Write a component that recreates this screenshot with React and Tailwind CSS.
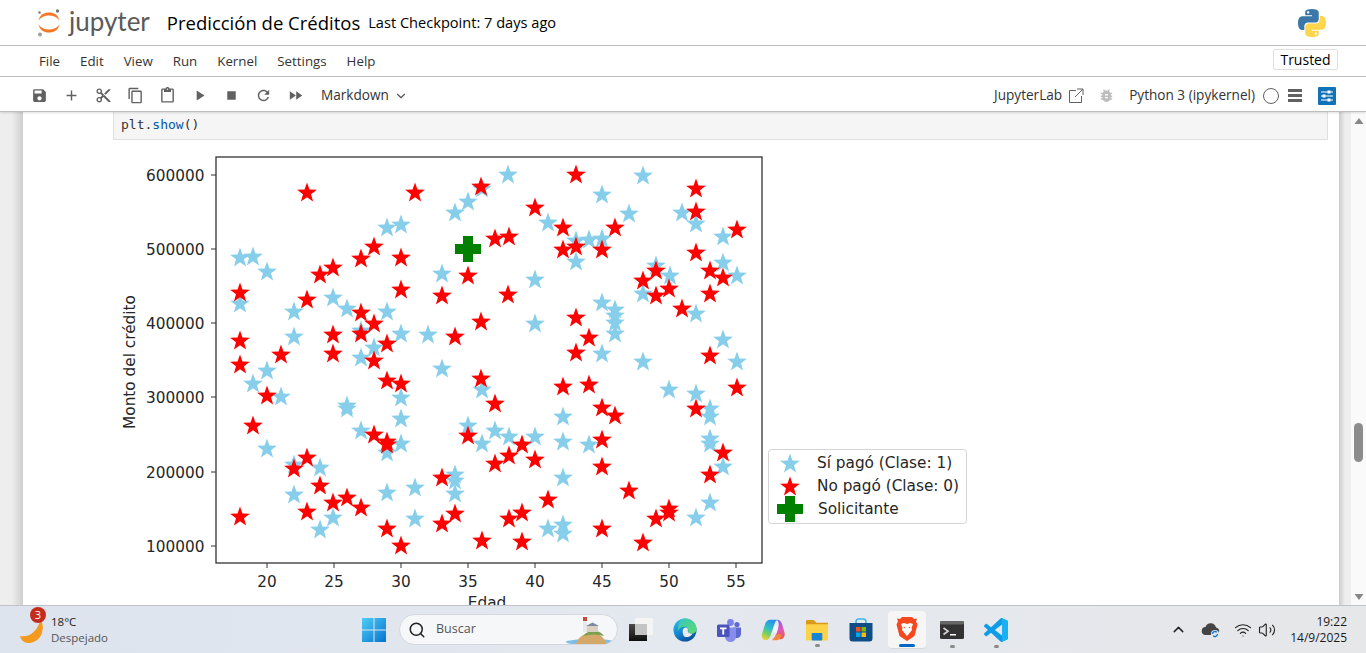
import { ChevronDown, ChevronUp, Wifi, Volume2, Search } from 'lucide-react';

const blue = [
  [240,257],[253,256],[267,271],[333,297],[347,308],[294,311],[387,311],[240,303],[294,336],[361,330],[401,333],[428,334],[361,357],[374,347],[267,370],[442,368],[387,227],[401,224],[442,273],[455,212],
  [508,174],[482,188],[468,201],[643,175],[602,194],[629,213],[682,212],[696,223],[548,222],[723,236],[576,240],[589,239],[602,238],[576,261],[535,279],[656,265],[670,275],[643,293],[723,262],[737,275],[696,313],[602,302],[615,309],[615,315],[615,322],[615,333],[535,323],[723,339],[602,353],[643,361],[737,361],
  [253,383],[281,396],[347,405],[347,408],[401,397],[401,418],[361,430],[401,443],[387,452],[267,448],[294,464],[320,467],[294,494],[387,492],[415,487],[333,517],[415,518],[320,529],
  [482,389],[669,389],[696,393],[710,408],[710,416],[563,416],[468,425],[495,430],[509,436],[482,443],[535,436],[563,441],[589,444],[710,438],[710,443],[723,466],[455,474],[455,480],[455,493],[563,477],[710,502],[696,517],[548,528],[563,524],[563,533],
];

const red = [
  [307,192],[415,192],[374,246],[401,257],[361,258],[333,267],[320,274],[401,289],[442,295],[307,299],[240,292],[361,312],[374,323],[361,333],[333,334],[240,340],[387,343],[281,354],[333,353],[374,360],[240,364],[387,380],[401,383],
  [481,186],[576,174],[696,188],[696,211],[535,207],[563,227],[615,227],[737,229],[495,238],[509,236],[563,249],[576,246],[602,249],[696,252],[468,275],[710,270],[723,277],[656,270],[643,280],[669,288],[656,295],[710,293],[508,294],[682,308],[576,317],[481,321],[455,336],[589,337],[576,352],[710,355],[481,378],
  [267,395],[253,425],[374,434],[387,441],[387,444],[307,457],[294,468],[320,485],[347,497],[333,502],[361,507],[307,511],[240,516],[387,528],[401,545],[442,477],[442,523],
  [563,386],[589,384],[737,387],[495,403],[602,407],[696,408],[615,415],[468,435],[602,439],[723,452],[522,444],[509,455],[495,463],[535,459],[602,466],[710,474],[629,490],[548,499],[669,508],[669,512],[656,518],[522,512],[509,518],[455,513],[602,528],[482,540],[522,541],[643,542],
];

const starPoints = Array.from({ length: 10 }, (_, i) => {
  const r = i % 2 === 0 ? 10.4 : 4.2;
  const a = (i * Math.PI) / 5;
  return `${(r * Math.sin(a)).toFixed(2)},${(1 - r * Math.cos(a)).toFixed(2)}`;
}).join(' ');

const xTicks = [[267,'20'],[334,'25'],[401,'30'],[468,'35'],[535,'40'],[602,'45'],[669,'50'],[736,'55']];
const yTicks = [[175,'600000'],[249,'500000'],[323,'400000'],[397,'300000'],[472,'200000'],[546,'100000']];

const chartFont = { fontFamily: '"DejaVu Sans", sans-serif' };

function Star({ x, y, fill }) {
  return <polygon points={starPoints} transform={`translate(${x} ${y})`} fill={fill} />;
}

function Plus({ x, y }) {
  return <path transform={`translate(${x} ${y})`} d="M-5 -13H5V-5H13V5H5V13H-5V5H-13V-5H-5Z" fill="#008000" />;
}

function Chart() {
  return (
    <svg width="870" height="470" viewBox="113 140 870 470" className="block shrink-0" style={chartFont}>
      {blue.map(([x, y], i) => <Star key={i} x={x} y={y} fill="#87ceeb" />)}
      {red.map(([x, y], i) => <Star key={i} x={x} y={y} fill="#ff0000" />)}
      <Plus x={468} y={249} />
      <rect x="216" y="157" width="546" height="406" fill="none" stroke="#333" strokeWidth="1.3" />
      {xTicks.map(([x, t]) => (
        <g key={t}>
          <line x1={x} x2={x} y1="563" y2="568" stroke="#333" />
          <text x={x} y="587" fontSize="15.3" textAnchor="middle" fill="#262626">{t}</text>
        </g>
      ))}
      {yTicks.map(([y, t]) => (
        <g key={t}>
          <line x1="211" x2="216" y1={y} y2={y} stroke="#333" />
          <text x="204.5" y={y + 5.5} fontSize="15.3" textAnchor="end" fill="#262626">{t}</text>
        </g>
      ))}
      <text x="487" y="608" fontSize="15.3" textAnchor="middle" fill="#262626">Edad</text>
      <text transform="translate(135 362) rotate(-90)" fontSize="15.3" textAnchor="middle" fill="#262626">Monto del crédito</text>
      <rect x="768.5" y="449.5" width="198" height="74" rx="3" fill="#fff" stroke="#d4d4d4" />
      <Star x={790} y={463} fill="#87ceeb" />
      <Star x={790} y={486} fill="#ff0000" />
      <Plus x={790} y={509} />
      <text x="817" y="468" fontSize="15.3" fill="#262626">Sí pagó (Clase: 1)</text>
      <text x="817" y="491" fontSize="15.3" fill="#262626">No pagó (Clase: 0)</text>
      <text x="818" y="514" fontSize="15.3" fill="#262626">Solicitante</text>
    </svg>
  );
}

function Md({ d, size = 17, fill = '#616161' }) {
  return (
    <svg width={size} height={size} viewBox="0 0 24 24" fill={fill}><path d={d} /></svg>
  );
}

const toolIcons = [
  'M17 3H5c-1.11 0-2 .9-2 2v14c0 1.1.89 2 2 2h14c1.1 0 2-.9 2-2V7l-4-4zm-5 16c-1.66 0-3-1.34-3-3s1.34-3 3-3 3 1.34 3 3-1.34 3-3 3zm3-10H5V5h10v4z',
  'M19 13h-6v6h-2v-6H5v-2h6V5h2v6h6v2z',
  'M9.64 7.64c.23-.5.36-1.05.36-1.64 0-2.21-1.79-4-4-4S2 3.79 2 6s1.79 4 4 4c.59 0 1.14-.13 1.64-.36L10 12l-2.36 2.36C7.14 14.13 6.59 14 6 14c-2.21 0-4 1.79-4 4s1.79 4 4 4 4-1.79 4-4c0-.59-.13-1.14-.36-1.64L12 14l7 7h3v-1L9.64 7.64zM6 8c-1.1 0-2-.89-2-2s.9-2 2-2 2 .89 2 2-.9 2-2 2zm0 12c-1.1 0-2-.89-2-2s.9-2 2-2 2 .89 2 2-.9 2-2 2zm6-7.5c-.28 0-.5-.22-.5-.5s.22-.5.5-.5.5.22.5.5-.22.5-.5.5zM19 3l-6 6 2 2 7-7V3z',
  'M16 1H4c-1.1 0-2 .9-2 2v14h2V3h12V1zm3 4H8c-1.1 0-2 .9-2 2v14c0 1.1.9 2 2 2h11c1.1 0 2-.9 2-2V7c0-1.1-.9-2-2-2zm0 16H8V7h11v14z',
  'M19 2h-4.18C14.4.84 13.3 0 12 0c-1.3 0-2.4.84-2.82 2H5c-1.1 0-2 .9-2 2v16c0 1.1.9 2 2 2h14c1.1 0 2-.9 2-2V4c0-1.1-.9-2-2-2zm-7 0c.55 0 1 .45 1 1s-.45 1-1 1-1-.45-1-1 .45-1 1-1zm7 18H5V4h2v3h10V4h2v16z',
  'M8 5v14l11-7z',
  'M6 6h12v12H6z',
  'M17.65 6.35C16.2 4.9 14.21 4 12 4c-4.42 0-7.99 3.58-7.99 8s3.57 8 7.99 8c3.73 0 6.84-2.55 7.73-6h-2.08c-.82 2.33-3.04 4-5.65 4-3.31 0-6-2.69-6-6s2.69-6 6-6c1.66 0 3.14.69 4.22 1.78L13 11h7V4l-2.35 2.35z',
  'M4 18l8.5-6L4 6v12zm9-12v12l8.5-6L13 6z',
];

function JupyterMark() {
  return (
    <svg width="24" height="29" viewBox="0 0 24 29">
      <path d="M1.5 12.5C3 6.5 7 4.5 12 4.5s9 2 10.500 8C20 9 16.500 7.500 12 7.500S4 9 1.500 12.500Z" fill="#f37726" />
      <path d="M1.500 16.500C3 22.500 7 24.500 12 24.500s9-2 10.500-8C20 20 16.500 21.500 12 21.500S4 20 1.500 16.500Z" fill="#f37726" />
      <circle cx="20.500" cy="3" r="1.700" fill="#767677" />
      <circle cx="2.500" cy="4.500" r="1.200" fill="#767677" />
      <circle cx="3" cy="26.500" r="2" fill="#9e9e9e" />
    </svg>
  );
}

function PythonLogo() {
  return (
    <svg width="28" height="28" viewBox="0 0 24 24">
      <path fill="#3b77a8" d="M11.914 0C5.82 0 6.2 2.656 6.2 2.656l.007 2.752h5.814v.826H3.9S0 5.789 0 11.969c0 6.18 3.403 5.96 3.403 5.96h2.03v-2.867s-.109-3.42 3.35-3.42h5.766s3.24.052 3.24-3.148V3.202S18.28 0 11.913 0zM8.708 1.85c.578 0 1.046.47 1.046 1.052 0 .581-.468 1.051-1.046 1.051-.579 0-1.046-.47-1.046-1.051 0-.582.467-1.052 1.046-1.052z" />
      <path fill="#fdd64b" d="M12.087 24c6.092 0 5.712-2.656 5.712-2.656l-.007-2.752h-5.814v-.826h8.123s3.9.445 3.9-5.735c0-6.18-3.404-5.96-3.404-5.96h-2.03v2.867s.109 3.42-3.35 3.42H9.45s-3.24-.052-3.24 3.148v5.292S5.72 24 12.087 24zm3.206-1.85c-.578 0-1.046-.47-1.046-1.052 0-.581.468-1.051 1.046-1.051.579 0 1.046.47 1.046 1.051 0 .582-.467 1.052-1.046 1.052z" />
    </svg>
  );
}

function WindowsLogo() {
  return (
    <svg width="24" height="24" viewBox="0 0 24 24">
      <defs>
        <linearGradient id="win" x1="0" y1="0" x2="1" y2="1">
          <stop offset="0" stopColor="#4fcdf5" />
          <stop offset="1" stopColor="#0673d0" />
        </linearGradient>
      </defs>
      <path fill="url(#win)" d="M0 0h11.500v11.500H0zM12.500 0H24v11.500H12.500zM0 12.500h11.500V24H0zM12.500 12.500H24V24H12.500z" />
    </svg>
  );
}

function TaskView() {
  return (
    <svg width="24" height="24" viewBox="0 0 24 24">
      <defs>
        <linearGradient id="tv" x1="0" y1="0" x2="0" y2="1">
          <stop offset="0" stopColor="#4a4a4a" />
          <stop offset="1" stopColor="#0e0e0e" />
        </linearGradient>
      </defs>
      <rect x="0" y="6" width="18" height="17" fill="url(#tv)" />
      <rect x="6" y="0" width="18" height="17" fill="#f4f4f4" />
      <rect x="6" y="6" width="12" height="11" fill="#c4c4c4" />
    </svg>
  );
}

function EdgeIcon() {
  return (
    <svg width="26" height="26" viewBox="0 0 26 26">
      <defs>
        <linearGradient id="edge" x1="0.1" y1="0" x2="0.6" y2="1">
          <stop offset="0" stopColor="#2fc0e6" />
          <stop offset="0.55" stopColor="#1688d4" />
          <stop offset="1" stopColor="#0b4f9c" />
        </linearGradient>
        <linearGradient id="edgeg" x1="0" y1="0" x2="1" y2="1">
          <stop offset="0" stopColor="#34c6c0" />
          <stop offset="1" stopColor="#62dc6a" />
        </linearGradient>
      </defs>
      <circle cx="13" cy="13" r="12.500" fill="url(#edge)" />
      <path d="M13 .5c7 0 12.500 5 12.500 11.500 0 3-2 5-5 5-2.500 0-4.500-1-4-3 .5-3-2-5-5-4.500C8 10 6 12 5.500 14 5 6 8 .5 13 .5Z" fill="url(#edgeg)" />
      <path d="M10.500 14c0-2.500 2-4 4-3.500 1.500.4 2 1.500 1.500 3-.4 1.500 1.500 3.500 5 3.500-1.500 3-5 4-7.500 3.500-2.500-.6-3-4-3-6.500Z" fill="#e8eaee" />
    </svg>
  );
}

function TeamsIcon() {
  return (
    <svg width="24" height="24" viewBox="0 0 24 24">
      <circle cx="20" cy="6.500" r="2.600" fill="#5f68d0" />
      <circle cx="13.500" cy="4.500" r="3.400" fill="#7b83eb" />
      <path d="M16 9.500h8v6.500a4 4 0 0 1-6 3.500" fill="#5f68d0" />
      <path d="M8 9.500h11v9a5.500 5.500 0 0 1-11 0Z" fill="#868ded" />
      <rect x="0" y="6.500" width="12.500" height="12.500" rx="1.500" fill="#4b53bc" />
      <path d="M3 9.500h6.500v1.700H7.200v5.300H5.300v-5.300H3Z" fill="#fff" />
    </svg>
  );
}

function CopilotIcon() {
  return (
    <svg width="26" height="26" viewBox="0 0 26 26">
      <defs>
        <linearGradient id="cop1" x1="0.6" y1="0" x2="0.2" y2="1">
          <stop offset="0" stopColor="#2a8fe8" />
          <stop offset="0.4" stopColor="#2bc0c8" />
          <stop offset="0.7" stopColor="#7fd05a" />
          <stop offset="1" stopColor="#f5cf3a" />
        </linearGradient>
        <linearGradient id="cop2" x1="0.4" y1="0" x2="0.7" y2="1">
          <stop offset="0" stopColor="#7a5be8" />
          <stop offset="0.5" stopColor="#d85cc0" />
          <stop offset="1" stopColor="#f0584a" />
        </linearGradient>
      </defs>
      <path d="M10 2h8c-2 1-3 3-4 6l-3 9c-1 4-3 7-6 7-3 0-5-3-4-7l3-9C5 4 7 2 10 2Z" fill="url(#cop1)" />
      <path d="M16 2h1c3 0 5 2 6 5l2.500 9c.8 4-1.500 7-4.500 7h-9c3-1 4-4 5-7l2-7c.5-2 .5-5-2-7Z" fill="url(#cop2)" />
      <path d="M11 24c3 0 4-3 5-6h6c0 3-2 6-5 6Z" fill="#f08a3a" />
      <path d="M14 10c.5-1 1.500-2 3-2 1 0 1.500 1 1.500 2l-1.500 6h-4Z" fill="#f4f4fa" />
    </svg>
  );
}

function ExplorerIcon() {
  return (
    <svg width="25" height="22" viewBox="0 0 25 22">
      <path d="M1 2A1.500 1.500 0 0 1 2.500 .5H9l3 3h12v3H1Z" fill="#d99a1c" />
      <path d="M1 5h23v16a1 1 0 0 1-1 1H2a1 1 0 0 1-1-1Z" fill="#fcd347" />
      <rect x="7" y="14" width="11" height="8" rx="1" fill="#1583d6" />
    </svg>
  );
}

function StoreIcon() {
  return (
    <svg width="24" height="24" viewBox="0 0 24 24">
      <path d="M7 6V3.500A2.500 2.500 0 0 1 9.500 1h5A2.500 2.500 0 0 1 17 3.500V6" fill="none" stroke="#38b6e8" strokeWidth="1.600" />
      <path d="M0.500 5h23v15.500a3 3 0 0 1-3 3h-17a3 3 0 0 1-3-3Z" fill="#0f4d87" />
      <rect x="7" y="9" width="4.500" height="4.500" fill="#f25022" />
      <rect x="12.500" y="9" width="4.500" height="4.500" fill="#7fba00" />
      <rect x="7" y="14.500" width="4.500" height="4.500" fill="#00a4ef" />
      <rect x="12.500" y="14.500" width="4.500" height="4.500" fill="#ffb900" />
    </svg>
  );
}

function BraveIcon() {
  return (
    <svg width="22" height="26" viewBox="0 0 22 26">
      <path d="M6 1h10l2 2 3-.5-1 3 1.500 3-3 11.500L11 25 3.500 20 .5 8.500 2 5.500 1 2.500l3 .5Z" fill="#f4491f" />
      <path d="M5 8l3-1 3 1 3-1 3 1-1.500 4 .5 2-2.500 3-2.500 3-2.500-3L6 14l.5-2Z" fill="#fff" />
      <path d="M7.500 10.500l2 1-1.500.8ZM14.500 10.500l-2 1 1.500.8Z" fill="#f4491f" />
    </svg>
  );
}

function TerminalIcon() {
  return (
    <svg width="24" height="18" viewBox="0 0 24 18">
      <rect width="24" height="18" rx="1.500" fill="#333" />
      <rect width="24" height="3.500" rx="1.500" fill="#666" />
      <path d="M3.500 7l4.500 3.200L3.500 13.500" fill="none" stroke="#d8d8d8" strokeWidth="1.600" />
      <rect x="10" y="13" width="6" height="1.500" fill="#fff" />
    </svg>
  );
}

function VsCodeIcon() {
  return (
    <svg width="24" height="24" viewBox="0 0 24 24">
      <path fill="#0d9de6" d="M23.15 2.587L18.21.21a1.494 1.494 0 0 0-1.705.29l-9.46 8.63-4.12-3.128a.999.999 0 0 0-1.276.057L.327 7.261A1 1 0 0 0 .326 8.74L3.899 12 .326 15.26a1 1 0 0 0 .001 1.479L1.65 17.94a.999.999 0 0 0 1.276.057l4.12-3.128 9.46 8.63a1.492 1.492 0 0 0 1.704.29l4.942-2.377A1.5 1.5 0 0 0 24 20.06V3.939a1.5 1.5 0 0 0-.85-1.352zm-5.146 14.861L10.826 12l7.178-5.448v10.896z" />
      <path fill="#1bb0f2" d="M18.004 23.79a1.5 1.5 0 0 0 .25-.022l4.896-2.355A1.5 1.5 0 0 0 24 20.06V3.939a1.5 1.5 0 0 0-.85-1.352L18.21.21c-.07-.034 0 0-.206-.08v6.422v10.896Z" />
    </svg>
  );
}

function Lighthouse() {
  return (
    <svg width="50" height="32" viewBox="0 0 50 32">
      <ellipse cx="25" cy="28" rx="25" ry="3" fill="#7fbde6" />
      <path d="M10 30c2-7 8-11 16-11s12 5 15 11Z" fill="#d4a868" />
      <path d="M17 22c3-4 7-5 12-5 4 0 7 2 9 5-7-2-14-2-21 0Z" fill="#7da050" />
      <rect x="17" y="7" width="4" height="11" fill="#e8e8e8" />
      <rect x="17" y="3" width="4" height="4" fill="#c9483a" />
      <rect x="21" y="12" width="11" height="6" fill="#d8cfc0" />
      <path d="M20 12l6.500-3.500L33 12Z" fill="#7a8aa0" />
    </svg>
  );
}

function Taskbar() {
  return (
    <div className="h-[48px] shrink-0 border-t border-[#bfc3c9] bg-gradient-to-r from-[#dde4ee] via-[#e4e8ef] to-[#e6e7e9] flex items-center relative">
      <div className="w-[362px] shrink-0 flex items-center pl-[20px] relative">
        <svg width="24" height="30" viewBox="0 0 24 30" className="mt-[2px]">
          <path d="M20 4c4 3 3.500 12 0 17-3 4-8 6-12 6-4 0-7-3-8-7 9 2 18-5 20-16Z" fill="#f39a1f" />
        </svg>
        <span className="absolute left-[30px] top-[-7px] w-[16px] h-[16px] rounded-full bg-[#c42b1c] text-white text-[11px] leading-[16px] text-center">3</span>
        <div className="ml-[7px] text-[11.5px] leading-[16px]">
          <div className="text-[#1a1a1a]">18°C</div>
          <div className="text-[#555]">Despejado</div>
        </div>
      </div>
      <WindowsLogo />
      <div className="ml-[13px] w-[219px] h-[31px] rounded-full bg-[#f5f7f9] border border-[#d4d8de] flex items-center pl-[8px] overflow-hidden">
        <Search size={18} color="#222" strokeWidth={2} />
        <span className="ml-[10px] text-[12.5px] text-[#555]">Buscar</span>
        <span className="ml-auto mr-[1px]"><Lighthouse /></span>
      </div>
      <div className="w-[380px] ml-[11px] flex items-center relative">
        <span className="w-[24px] flex justify-center"><TaskView /></span>
        <span className="w-[24px] ml-[20px] flex justify-center"><EdgeIcon /></span>
        <span className="w-[24px] ml-[20px] flex justify-center"><TeamsIcon /></span>
        <span className="w-[24px] ml-[20px] flex justify-center"><CopilotIcon /></span>
        <span className="w-[24px] ml-[20px] flex justify-center relative">
          <ExplorerIcon />
          <span className="absolute left-[10px] top-[25px] w-[5px] h-[3px] rounded-full bg-[#8a8a8a]" />
        </span>
        <span className="w-[24px] ml-[20px] flex justify-center"><StoreIcon /></span>
        <span className="w-[38px] h-[38px] ml-[15px] flex justify-center items-center bg-[#f6f6f7] rounded-[4px] border-b border-[#d8d8d8] relative">
          <BraveIcon />
          <span className="absolute left-[11px] bottom-[1px] w-[16px] h-[3px] rounded-full bg-[#0067c0]" />
        </span>
        <span className="w-[24px] ml-[14px] flex justify-center relative">
          <TerminalIcon />
          <span className="absolute left-[10px] top-[24px] w-[5px] h-[3px] rounded-full bg-[#8a8a8a]" />
        </span>
        <span className="w-[24px] ml-[20px] flex justify-center relative">
          <VsCodeIcon />
          <span className="absolute left-[10px] top-[27px] w-[5px] h-[3px] rounded-full bg-[#8a8a8a]" />
        </span>
      </div>
      <div className="ml-auto flex items-center pr-[19px]">
        <ChevronUp size={17} color="#222" strokeWidth={2} />
        <svg width="20" height="18" viewBox="0 0 20 18" className="ml-[14px]">
          <path d="M5 14a4 4 0 0 1-.5-8A5.500 5.500 0 0 1 15 6.500 3.800 3.800 0 0 1 15 14Z" fill="#444" />
          <circle cx="14" cy="13" r="4" fill="#e6e7e9" />
          <path d="M11.500 13a2.500 2.500 0 0 1 4.300-1.700M16.500 13a2.500 2.500 0 0 1-4.300 1.700" fill="none" stroke="#0a78d4" strokeWidth="1.300" />
        </svg>
        <Wifi size={18} color="#222" strokeWidth={1.6} className="ml-[13px]" />
        <Volume2 size={18} color="#222" strokeWidth={1.5} className="ml-[6px]" />
        <div className="ml-[13px] w-[58px] text-right text-[12px] leading-[16px] text-[#1a1a1a]">
          <div>19:22</div>
          <div>14/9/2025</div>
        </div>
      </div>
    </div>
  );
}

export default function App() {
  return (
    <div className="w-[1366px] h-[653px] flex flex-col overflow-hidden bg-white" style={{ fontFamily: '"Open Sans", "Noto Sans", sans-serif' }}>
      {/* Title bar */}
      <div className="h-[46px] shrink-0 border-b border-[#bdbdbd] flex items-center pl-[37px] pr-[40px]">
        <JupyterMark />
        <span className="ml-[8px] text-[26px] leading-none text-[#5a5a5a] mb-[3px]" style={{ fontFamily: 'Lato, sans-serif' }}>jupyter</span>
        <span className="ml-[17px] text-[18.5px] text-black">Predicción de Créditos</span>
        <span className="ml-[8px] text-[14.6px] text-black">Last Checkpoint: 7 days ago</span>
        <span className="ml-auto"><PythonLogo /></span>
      </div>
      {/* Menu */}
      <div className="h-[31px] shrink-0 border-b border-[#bdbdbd] flex items-center pl-[39px] pr-[28px] text-[13.3px] text-[#333]">
        <span className="mt-[1px]">File</span>
        <span className="ml-[20px] mt-[1px]">Edit</span>
        <span className="ml-[20px] mt-[1px]">View</span>
        <span className="ml-[20px] mt-[1px]">Run</span>
        <span className="ml-[20px] mt-[1px]">Kernel</span>
        <span className="ml-[20px] mt-[1px]">Settings</span>
        <span className="ml-[20px] mt-[1px]">Help</span>
        <span className="ml-auto mb-[3px] h-[21px] w-[65px] border border-[#e0e0e0] rounded-[2px] flex items-center justify-center text-[14px] text-black">Trusted</span>
      </div>
      {/* Toolbar */}
      <div className="h-[35px] shrink-0 border-b border-[#bdbdbd] shadow-[0_1px_2px_rgba(0,0,0,0.12)] relative z-10 flex items-center pt-[3px] pl-[23px] pr-[30px] text-[13.6px] text-[#333]">
        {toolIcons.map((d) => (
          <span key={d} className="w-[32px] flex justify-center"><Md d={d} /></span>
        ))}
        <span className="ml-[10px]">Markdown</span>
        <ChevronDown size={14} color="#555" className="ml-[5px]" />
        <span className="ml-auto">JupyterLab</span>
        <svg width="16" height="16" viewBox="0 0 16 16" className="ml-[6px]" fill="none" stroke="#616161" strokeWidth="1">
          <path d="M8 2.500H1.500v12h12V8M9 1h6v6M15 1L7 9" />
        </svg>
        <svg width="17" height="17" viewBox="0 0 24 24" className="ml-[14px]" fill="#bdbdbd">
          <path d="M20 8h-2.810c-.45-.78-1.070-1.450-1.820-1.960L17 4.410 15.590 3l-2.170 2.170C12.960 5.060 12.490 5 12 5s-.96.060-1.410.17L8.410 3 7 4.410l1.620 1.630C7.880 6.550 7.260 7.220 6.810 8H4v2h2.090c-.05.33-.09.66-.09 1v1H4v2h2v1c0 .34.04.67.09 1H4v2h2.810c1.040 1.790 2.970 3 5.190 3s4.150-1.210 5.190-3H20v-2h-2.090c.05-.33.09-.66.09-1v-1h2v-2h-2v-1c0-.34-.04-.67-.09-1H20V8zm-6 8h-4v-2h4v2zm0-4h-4v-2h4v2z" />
        </svg>
        <span className="ml-[14px]">Python 3 (ipykernel)</span>
        <span className="ml-[8px] w-[16px] h-[16px] rounded-full border-[1.5px] border-[#616161]" />
        <span className="ml-[9px] w-[14px] flex flex-col gap-[2px]">
          <span className="h-[3px] bg-[#616161]" />
          <span className="h-[3px] bg-[#616161]" />
          <span className="h-[3px] bg-[#616161]" />
        </span>
        <span className="ml-[16px] w-[18px] h-[18px] bg-[#1272b8] rounded-[1px] flex items-center justify-center">
          <svg width="14" height="14" viewBox="0 0 14 14" stroke="#fff" strokeWidth="1" fill="#fff">
            <path d="M1 3h12M1 7h12M1 11h12" />
            <rect x="8" y="2" width="2" height="2" />
            <rect x="3" y="6" width="2" height="2" />
            <rect x="8" y="10" width="2" height="2" />
          </svg>
        </span>
      </div>
      {/* Notebook */}
      <div className="flex-1 min-h-0 flex overflow-hidden">
        <div className="w-[23px] shrink-0 bg-gradient-to-r from-[#eeeeee] via-[#eeeeee] to-[#cfcfcf]" />
        <div className="w-[1316px] shrink-0 bg-white pl-[90px] pr-[11px] overflow-hidden">
          <div className="h-[28px] bg-[#f5f5f5] border border-t-0 border-[#e0e0e0] pl-[7px] pb-[2px] flex items-center text-[13px] text-[#333]" style={{ fontFamily: '"DejaVu Sans Mono", monospace' }}>
            plt.<span className="text-[#0055aa]">show</span>()
          </div>
          <Chart />
        </div>
        <div className="w-[12px] shrink-0 bg-gradient-to-r from-[#cccccc] via-[#eeeeee] to-[#eeeeee]" />
        <div className="w-[15px] shrink-0 bg-[#fafafa] flex flex-col items-center">
          <svg width="10" height="8" viewBox="0 0 10 8" className="mt-[5px]"><path d="M5 1l4.500 6H.5Z" fill="#888" /></svg>
          <div className="w-[9px] h-[39px] rounded-full bg-[#8c8c8c] mt-[298px]" />
          <svg width="10" height="8" viewBox="0 0 10 8" className="mt-auto mb-[4px]"><path d="M5 7l4.500-6H.5Z" fill="#888" /></svg>
        </div>
      </div>
      <Taskbar />
    </div>
  );
}
